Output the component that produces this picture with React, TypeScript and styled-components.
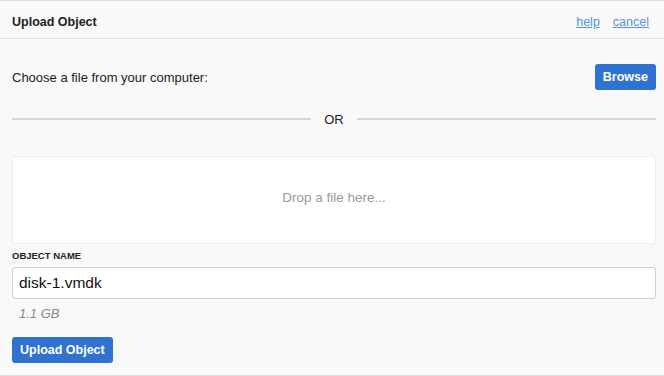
import styled, { createGlobalStyle } from "styled-components";

const GlobalStyle = createGlobalStyle`
  html, body {
    margin: 0;
    padding: 0;
    background: #f9f9f9;
    font-family: "Liberation Sans", Arial, sans-serif;
    color: #222;
  }
`;

const App = () => {
  return (
    <>
      <GlobalStyle />
      <Panel>
        <Header>
          <Title>Upload Object</Title>
          <HeaderLinks>
            <LinkText href="#">help</LinkText>
            <LinkText href="#">cancel</LinkText>
          </HeaderLinks>
        </Header>
        <Body>
          <ChooseRow>
            <span>Choose a file from your computer:</span>
            <Button>Browse</Button>
          </ChooseRow>
          <Divider>
            <Line />
            <span>OR</span>
            <Line />
          </Divider>
          <DropZone>Drop a file here...</DropZone>
          <Label>Object Name</Label>
          <NameInput defaultValue="disk-1.vmdk" />
          <Size>1.1 GB</Size>
          <Footer>
            <Button>Upload Object</Button>
          </Footer>
        </Body>
      </Panel>
    </>
  );
};

export default App;

const Panel = styled.div`
  height: 376px;
  box-sizing: border-box;
  border-top: 1px solid #dcdcdc;
  border-bottom: 1px solid #dcdcdc;
  background: #f9f9f9;
`;

const Header = styled.header`
  height: 38px;
  box-sizing: border-box;
  display: flex;
  align-items: center;
  justify-content: space-between;
  padding: 5px 15px 0 12px;
  border-bottom: 1px solid #dcdcdc;
`;

const Title = styled.h1`
  margin: 0;
  font-size: 12.5px;
  font-weight: bold;
  color: #222;
`;

const HeaderLinks = styled.nav`
  display: flex;
  gap: 13px;
`;

const LinkText = styled.a`
  font-size: 12.5px;
  color: #5592d8;
  text-decoration: underline;
`;

const Body = styled.section`
  padding: 25px 8px 0 12px;
  display: flex;
  flex-direction: column;
`;

const ChooseRow = styled.div`
  display: flex;
  align-items: center;
  justify-content: space-between;
  font-size: 13px;
  color: #222;
`;

const Button = styled.button`
  height: 26px;
  padding: 0 8px;
  border: none;
  border-radius: 3px;
  background: #2f72cf;
  color: #fff;
  font-family: inherit;
  font-size: 12.5px;
  font-weight: bold;
  cursor: pointer;
`;

const Divider = styled.div`
  margin-top: 22px;
  height: 14px;
  display: flex;
  align-items: center;
  gap: 13px;
  font-size: 13px;
  color: #222;
`;

const Line = styled.div`
  flex: 1;
  height: 2px;
  background: #d5d6da;
`;

const DropZone = styled.div`
  margin-top: 30px;
  height: 88px;
  box-sizing: border-box;
  padding-bottom: 6px;
  border: 1px dotted #dedede;
  border-radius: 3px;
  background: #fff;
  display: flex;
  align-items: center;
  justify-content: center;
  font-size: 13.5px;
  color: #9a9a9a;
`;

const Label = styled.label`
  margin-top: 6px;
  font-size: 9.5px;
  line-height: 12px;
  font-weight: bold;
  text-transform: uppercase;
  color: #222;
`;

const NameInput = styled.input`
  margin-top: 5px;
  height: 32px;
  box-sizing: border-box;
  padding: 0 6px;
  border: 1px solid #d0d0d0;
  border-radius: 3px;
  background: #fff;
  font-family: inherit;
  font-size: 15.5px;
  color: #111;
  outline: none;
`;

const Size = styled.div`
  margin-top: 7px;
  padding-left: 7px;
  font-size: 13px;
  line-height: 16px;
  font-style: italic;
  color: #888;
`;

const Footer = styled.div`
  margin-top: 15px;
  display: flex;
`;
